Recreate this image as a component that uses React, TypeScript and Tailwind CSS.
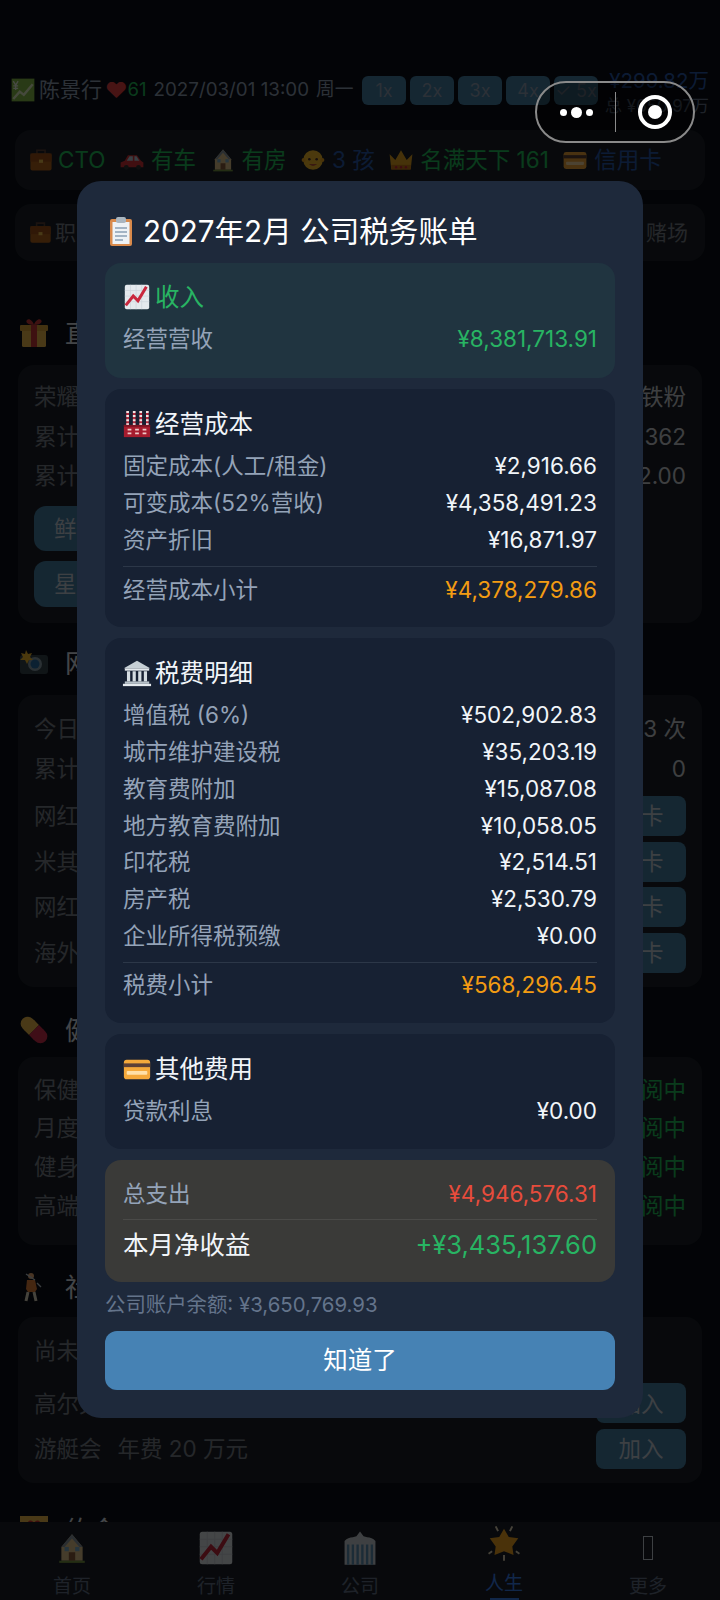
import type { ReactNode } from "react";

const font = { fontFamily: '"Inter", "Noto Sans CJK SC", sans-serif' };

function Emoji({ size = 28, children }: { size?: number; children: ReactNode }) {
  return (
    <svg width={size} height={size} viewBox="0 0 32 32" className="shrink-0">
      {children}
    </svg>
  );
}

const Briefcase = ({ size }: { size?: number }) => (
  <Emoji size={size}>
    <path d="M11 8V4h10v4" fill="none" stroke="#5d4037" strokeWidth="2" />
    <rect x="3" y="8" width="26" height="21" rx="2.5" fill="#b5651d" />
    <rect x="3" y="8" width="26" height="10" fill="#a0521a" />
    <rect x="13.5" y="15.5" width="5" height="4" fill="#f2c14e" />
  </Emoji>
);
const CreditCard = ({ size }: { size?: number }) => (
  <Emoji size={size}>
    <rect x="2" y="6" width="28" height="21" rx="3" fill="#f5a93b" />
    <rect x="2" y="10" width="28" height="4" fill="#5d4037" />
    <rect x="5" y="18" width="22" height="4" rx="1" fill="#ffe0a8" />
  </Emoji>
);
const Chart = ({ size }: { size?: number }) => (
  <Emoji size={size}>
    <rect x="3" y="3" width="26" height="26" rx="2" fill="#e4e9ed" />
    <path d="M3 9h26M3 15h26M3 21h26M9 3v26M15 3v26M21 3v26" stroke="#cfd6dc" strokeWidth="0.8" />
    <path d="M4 25 12 15l5 5 9-15" fill="none" stroke="#c9283e" strokeWidth="3.2" />
  </Emoji>
);
const YenChart = () => (
  <Emoji size={26}>
    <rect x="2" y="2" width="28" height="28" fill="#8bc34a" />
    <path d="M4 5l3 5 3-5M7 10v6M4 11h6M4 14h6" fill="none" stroke="#f1f8e9" strokeWidth="1.6" />
    <path d="M4 27 12 18l5 4 11-13" fill="none" stroke="#e8f5c8" strokeWidth="3" />
  </Emoji>
);
const Clipboard = () => (
  <Emoji size={32}>
    <rect x="5" y="4" width="22" height="27" rx="2" fill="#d98a4b" />
    <rect x="7.5" y="7" width="17" height="22" fill="#eef2f5" />
    <path d="M10 13h12M10 17h12M10 21h12M10 25h8" stroke="#8aa0b4" strokeWidth="1.6" />
    <rect x="11" y="2" width="10" height="6" rx="2" fill="#aab6c0" />
  </Emoji>
);
const Factory = () => (
  <Emoji size={30}>
    <path d="M6 2v15M13 2v15M20 2v15M27 2v15" stroke="#b5283c" strokeWidth="2.8" />
    <path d="M6 2v15M13 2v15M20 2v15M27 2v15" stroke="#efe3e3" strokeWidth="2.8" strokeDasharray="2.2 2.2" />
    <rect x="2" y="17" width="28" height="13" fill="#a61c2e" />
    <path d="M2 17h28v2H2z" fill="#7d1423" />
    <path d="M6 22h4M14 22h4M22 22h4M6 26h4M14 26h4M22 26h4" stroke="#f0c9c9" strokeWidth="2" />
  </Emoji>
);
const Bank = () => (
  <Emoji size={30}>
    <path d="M16 3 30 11H2z" fill="#c7d0d6" />
    <rect x="3" y="11" width="26" height="2.5" fill="#e4e9ed" />
    <path d="M7 14v11M13 14v11M19 14v11M25 14v11" stroke="#d5dde2" strokeWidth="3.4" />
    <rect x="3" y="25" width="26" height="2.5" fill="#b8c2c9" />
    <rect x="1" y="27.5" width="30" height="2.5" fill="#e4e9ed" />
  </Emoji>
);
const Car = ({ size }: { size?: number }) => (
  <Emoji size={size}>
    <path d="M2 25v-6l5-2 4-7h11l5 7 3 2v6z" fill="#d9343a" />
    <path d="M13 11.5h4V17H9.5zM19 11.5h2.5L25 17h-6z" fill="#bcd3e3" />
    <circle cx="9" cy="25" r="3" fill="#333" />
    <circle cx="24" cy="25" r="3" fill="#333" />
  </Emoji>
);
const House = ({ size }: { size?: number }) => (
  <Emoji size={size}>
    <path d="M16 3 26 15v13H6V15z" fill="#e6c88f" />
    <path d="M16 3 26 15h-3L16 7l-7 8H6z" fill="#8d9aa6" />
    <rect x="13" y="20" width="6" height="8" fill="#8d5f3c" />
    <rect x="9" y="15" width="4" height="4" fill="#7fb2d1" />
    <rect x="19" y="15" width="4" height="4" fill="#7fb2d1" />
    <rect x="4" y="28" width="24" height="2" fill="#7b9a43" />
  </Emoji>
);
const Baby = ({ size }: { size?: number }) => (
  <Emoji size={size}>
    <circle cx="16" cy="16" r="12" fill="#fbc02d" />
    <circle cx="4.5" cy="16" r="2.5" fill="#f5ab20" />
    <circle cx="27.5" cy="16" r="2.5" fill="#f5ab20" />
    <circle cx="11.5" cy="15" r="1.6" fill="#4e342e" />
    <circle cx="20.5" cy="15" r="1.6" fill="#4e342e" />
    <path d="M11 21c3 3 7 3 10 0" fill="#c2553b" />
  </Emoji>
);
const Crown = ({ size }: { size?: number }) => (
  <Emoji size={size}>
    <path d="M4 27 2 9l7 7 7-12 7 12 7-7-2 18z" fill="#eaa823" />
    <rect x="4" y="22" width="24" height="6" fill="#c9781a" />
    <circle cx="10" cy="25" r="1.5" fill="#c9283e" />
    <circle cx="16" cy="25" r="1.5" fill="#c9283e" />
    <circle cx="22" cy="25" r="1.5" fill="#c9283e" />
  </Emoji>
);
const Gift = () => (
  <Emoji size={32}>
    <rect x="4" y="12" width="24" height="18" rx="1.5" fill="#f4c04e" />
    <rect x="2" y="8" width="28" height="6" rx="1" fill="#e2a93a" />
    <rect x="13" y="8" width="6" height="22" fill="#d13b3b" />
    <path d="M16 8C10 8 7 5 9 3c2-2 6 1 7 5 1-4 5-7 7-5 2 2-1 5-7 5z" fill="#d13b3b" />
  </Emoji>
);
const CameraFlash = () => (
  <Emoji size={32}>
    <rect x="2" y="8" width="28" height="19" rx="3" fill="#37474f" />
    <circle cx="17" cy="17" r="7" fill="#90a4ae" />
    <circle cx="17" cy="17" r="4.5" fill="#2a6fa8" />
    <path d="m8 3 2 4 4-1-2 4 3 3-4 0-2 4-2-4-5 0 3-3-2-4 4 1z" fill="#fbc02d" />
  </Emoji>
);
const Pill = () => (
  <Emoji size={32}>
    <g transform="rotate(45 16 16)">
      <rect x="0" y="9" width="16" height="14" rx="7" fill="#f4c04e" />
      <rect x="9" y="9" width="7" height="14" fill="#f4c04e" />
      <rect x="16" y="9" width="16" height="14" rx="7" fill="#d32f4f" />
      <rect x="16" y="9" width="7" height="14" fill="#d32f4f" />
    </g>
  </Emoji>
);
const Golfer = () => (
  <Emoji size={32}>
    <circle cx="13" cy="5" r="3" fill="#f3b27a" />
    <path d="M9 9h8l2 9-2 3h-7l-2-3z" fill="#e8823a" />
    <path d="M10 21 8 30M16 21l2 9" stroke="#e8e0c8" strokeWidth="3" />
    <path d="M17 9 8 3M19 12l4 4" stroke="#c7d0d6" strokeWidth="1.4" />
  </Emoji>
);
const LoveLetter = () => (
  <Emoji size={32}>
    <rect x="2" y="2" width="28" height="24" fill="#f4c04e" />
    <path d="M16 19C9 13 8 9 11 7c2-1 4 0 5 2 1-2 3-3 5-2 3 2 2 6-5 12z" fill="#d32f2f" />
  </Emoji>
);
const Office = () => (
  <Emoji size={38}>
    <path d="M3 30V10q3-3 7-3l3-1 3-4 3 4 3 1q4 0 7 3v20z" fill="#cfd6dc" />
    <path d="M6 13v17M10 13v17M14 13v17M18 13v17M22 13v17M26 13v17" stroke="#5f93b8" strokeWidth="2" />
  </Emoji>
);
const Glowing = () => (
  <Emoji size={38}>
    <path d="m16 4 4 7 8 1-5 7 1 7-8-3-8 3 1-7-5-7 8-1z" fill="#f7a823" />
    <path d="M9 2l2 4M23 2l-2 4M3 25l3-2M29 25l-3-2M16 26v5" stroke="#e9dcc0" strokeWidth="1.6" />
  </Emoji>
);

function SpeedButton({ label }: { label: string }) {
  return (
    <div className="w-[44px] h-[29px] rounded-md bg-[#4682a8] text-[#94a3b8] text-[18px] flex items-center justify-center whitespace-nowrap">
      {label}
    </div>
  );
}

function BgRow({ left, right, rightClass = "text-[#cfd4da]", heightClass = "h-[39.7px]" }: { left: string; right: ReactNode; rightClass?: string; heightClass?: string }) {
  return (
    <div className={`flex justify-between items-center text-[22.5px] text-[#7c838e] ${heightClass}`}>
      <span>{left}</span>
      <span className={rightClass}>{right}</span>
    </div>
  );
}

function BgAction({ left, action }: { left: ReactNode; action: string }) {
  return (
    <div className="flex justify-between items-center h-[45.5px] text-[22.5px] text-[#7c838e]">
      <span className="flex gap-[16px]">{left}</span>
      <span className="w-[90px] h-[40px] rounded-lg bg-[#4682a8] text-[#cbd5e1] flex items-center justify-center">{action}</span>
    </div>
  );
}

function SectionTitle({ icon, title, className = "mb-[10px]" }: { icon: ReactNode; title: string; className?: string }) {
  return (
    <div className={`flex items-center gap-[15px] h-[44px] text-[26px] text-[#e2e8f0] ${className}`}>
      {icon}
      <span>{title}</span>
    </div>
  );
}

function Background() {
  return (
    <div className="px-[18px] pt-[72px]">
      <div className="-mx-[8px] flex items-center h-[36px] text-[21px] text-[#94a3b8] whitespace-nowrap">
        <div className="w-[352px] flex items-center">
          <YenChart />
          <span className="ml-[3px]">陈景行</span>
          <span className="ml-[3px] text-[#ef4444] text-[22px] leading-none">♥</span>
          <span className="text-[#22c55e] text-[18.5px]">61</span>
          <span className="ml-[7px] text-[18.8px]">2027/03/01 13:00</span>
          <span className="ml-[7px] text-[18.8px]">周一</span>
        </div>
        <div className="flex gap-[4px]">
          <SpeedButton label="1x" />
          <SpeedButton label="2x" />
          <SpeedButton label="3x" />
          <SpeedButton label="4x" />
          <SpeedButton label="✓ 5x" />
        </div>
        <div className="ml-auto pr-[1px] mt-[6px] text-right leading-none">
          <div className="text-[20.5px] text-[#2a5cb0]">¥299.82万</div>
          <div className="mt-[6px] text-[17px] text-[#64748b]">总 ¥650.97万</div>
        </div>
      </div>

      <div className="-mx-[3px] mt-[22px] h-[60px] rounded-2xl bg-[#1c2129] px-[13px] flex items-center gap-[13.5px] text-[22.5px] whitespace-nowrap">
        <span className="flex items-center gap-[4px] text-[#22c55e]"><Briefcase size={26} /> CTO</span>
        <span className="flex items-center gap-[6px] text-[#22c55e]"><Car size={26} /> 有车</span>
        <span className="flex items-center gap-[6px] text-[#22c55e]"><House size={26} /> 有房</span>
        <span className="flex items-center gap-[6px] text-[#2a5cb0]"><Baby size={26} /> 3 孩</span>
        <span className="flex items-center gap-[6px] text-[#22c55e]"><Crown size={26} /> 名满天下 161</span>
        <span className="flex items-center gap-[6px] text-[#2a5cb0]"><CreditCard size={26} /> 信用卡</span>
      </div>

      <div className="-mx-[3px] mt-[14px] h-[57px] rounded-2xl bg-[#1c2129] pl-[13px] pr-[17px] flex items-center justify-between text-[21px] text-[#7c838e]">
        <span className="flex items-center gap-[2px]"><Briefcase size={25} />职业</span>
        <span>赌场</span>
      </div>

      <div className="mt-[50px]">
        <SectionTitle icon={<Gift />} title="直播" />
        <div className="rounded-2xl bg-[#1c2129] h-[258px] px-[16px] pt-[12px]">
          <BgRow left="荣耀等级" right="铁粉" />
          <BgRow left="累计粉丝" right="362" />
          <BgRow left="累计收入" right="2.00" />
          <div className="mt-[10px] w-[300px] h-[45px] rounded-xl bg-[#4682a8] text-[#cbd5e1] text-[22.5px] pl-[20px] flex items-center">鲜花</div>
          <div className="mt-[10px] w-[300px] h-[46px] rounded-xl bg-[#4682a8] text-[#cbd5e1] text-[22.5px] pl-[20px] flex items-center">星光</div>
        </div>
      </div>

      <div className="mt-[18px]">
        <SectionTitle icon={<CameraFlash />} title="网红" />
        <div className="rounded-2xl bg-[#1c2129] h-[292px] px-[16px] pt-[14px]">
          <BgRow left="今日打卡" right="3 次" />
          <BgRow left="累计打卡" right="0" />
          <div className="mt-[5px]">
            <BgAction left="网红餐厅" action="打卡" />
            <BgAction left="米其林" action="打卡" />
            <BgAction left="网红景点" action="打卡" />
            <BgAction left="海外旅行" action="打卡" />
          </div>
        </div>
      </div>

      <div className="mt-[21px]">
        <SectionTitle icon={<Pill />} title="健康" className="mb-[5px]" />
        <div className="rounded-2xl bg-[#1c2129] h-[188px] px-[16px] pt-[13px]">
          <BgRow left="保健品" right="订阅中" rightClass="text-[#22c55e]" heightClass="h-[38.8px]" />
          <BgRow left="月度体检" right="订阅中" rightClass="text-[#22c55e]" heightClass="h-[38.8px]" />
          <BgRow left="健身房" right="订阅中" rightClass="text-[#22c55e]" heightClass="h-[38.8px]" />
          <BgRow left="高端医疗" right="订阅中" rightClass="text-[#22c55e]" heightClass="h-[38.8px]" />
        </div>
      </div>

      <div className="mt-[20px]">
        <SectionTitle icon={<Golfer />} title="社交" className="mb-[8px]" />
        <div className="rounded-2xl bg-[#1c2129] h-[166px] px-[16px] pt-[14px]">
          <BgRow left="尚未加入" right="" />
          <div className="mt-[10px]">
            <BgAction left="高尔夫俱乐部" action="加入" />
            <BgAction left={<><span>游艇会</span><span>年费 20 万元</span></>} action="加入" />
          </div>
        </div>
      </div>

      <div className="mt-[25px]">
        <SectionTitle icon={<LoveLetter />} title="约会" />
      </div>
    </div>
  );
}

function TabBar() {
  const tabs = [
    { label: "首页", icon: <House size={34} /> },
    { label: "行情", icon: <Chart size={40} /> },
    { label: "公司", icon: <Office /> },
    { label: "人生", icon: <Glowing />, active: true },
    { label: "更多", icon: <div className="w-[10px] h-[24px] border border-[#cbd5e1]" /> },
  ];
  return (
    <div className="absolute left-0 right-0 bottom-0 h-[78px] bg-[#1c2129] flex">
      {tabs.map((t) => (
        <div key={t.label} className="flex-1 relative flex flex-col items-center pt-[8px]">
          <div className={t.active ? "h-[36px] flex items-center justify-center -mt-[5px]" : "h-[36px] flex items-center justify-center"}>{t.icon}</div>
          <span className={t.active ? "mt-[11px] text-[19px] leading-[24px] text-[#3b82f6]" : "mt-[9px] text-[19px] leading-[24px] text-[#64748b]"}>{t.label}</span>
          {t.active && <div className="absolute bottom-0 w-[29px] h-[2px] bg-[#3b82f6]" />}
        </div>
      ))}
    </div>
  );
}

function Row({ label, value, valueClass = "text-[#f1f5f9]" }: { label: string; value: string; valueClass?: string }) {
  return (
    <div className="flex justify-between items-center h-[36.7px] text-[22.5px]">
      <span className="text-[#94a3b8]">{label}</span>
      <span className={valueClass}>{value}</span>
    </div>
  );
}

function Heading({ icon, title, className = "text-[#f1f5f9]" }: { icon: ReactNode; title: string; className?: string }) {
  return (
    <div className={`flex items-center gap-[4px] h-[34px] text-[24.5px] mb-[7px] ${className}`}>
      <div className="w-[28px] flex justify-center">{icon}</div>
      <span>{title}</span>
    </div>
  );
}

function BillModal() {
  return (
    <div className="absolute left-[77px] top-[181px] w-[566px] h-[1237px] rounded-[24px] bg-[#1e293b] px-[28px] pt-[30px]">
      <div className="flex items-center gap-[6px] h-[40px] text-[29.6px] text-white">
        <Clipboard />
        <span>2027年2月 公司税务账单</span>
      </div>

      <div className="mt-[12px] rounded-2xl bg-[#203440] h-[115px] px-[18px] pt-[17px]">
        <Heading icon={<Chart size={30} />} title="收入" className="text-[#28b463]" />
        <Row label="经营营收" value="¥8,381,713.91" valueClass="text-[#28b463]" />
      </div>

      <div className="mt-[11px] rounded-2xl bg-[#172133] h-[238px] px-[18px] pt-[18px]">
        <Heading icon={<Factory />} title="经营成本" />
        <Row label="固定成本(人工/租金)" value="¥2,916.66" />
        <Row label="可变成本(52%营收)" value="¥4,358,491.23" />
        <Row label="资产折旧" value="¥16,871.97" />
        <div className="mt-[8px] pt-[4px] border-t border-[#2c3748]">
          <Row label="经营成本小计" value="¥4,378,279.86" valueClass="text-[#f39c12]" />
        </div>
      </div>

      <div className="mt-[11px] rounded-2xl bg-[#172133] h-[385px] px-[18px] pt-[18px]">
        <Heading icon={<Bank />} title="税费明细" />
        <Row label="增值税 (6%)" value="¥502,902.83" />
        <Row label="城市维护建设税" value="¥35,203.19" />
        <Row label="教育费附加" value="¥15,087.08" />
        <Row label="地方教育费附加" value="¥10,058.05" />
        <Row label="印花税" value="¥2,514.51" />
        <Row label="房产税" value="¥2,530.79" />
        <Row label="企业所得税预缴" value="¥0.00" />
        <div className="mt-[8px] pt-[4px] border-t border-[#2c3748]">
          <Row label="税费小计" value="¥568,296.45" valueClass="text-[#f39c12]" />
        </div>
      </div>

      <div className="mt-[11px] rounded-2xl bg-[#172133] h-[115px] px-[18px] pt-[18px]">
        <Heading icon={<CreditCard size={30} />} title="其他费用" />
        <Row label="贷款利息" value="¥0.00" />
      </div>

      <div className="mt-[11px] rounded-2xl bg-[#3a3a38] h-[122px] px-[18px] pt-[16px]">
        <Row label="总支出" value="¥4,946,576.31" valueClass="text-[#e74c3c]" />
        <div className="mt-[6px] pt-[7px] border-t border-[#4a4a48] flex justify-between items-center h-[44px] text-[25.5px]">
          <span className="text-[#f1f5f9]">本月净收益</span>
          <span className="text-[#28b463]">+¥3,435,137.60</span>
        </div>
      </div>

      <div className="mt-[10px] h-[26px] flex items-center text-[20.4px] text-[#64748b]">公司账户余额: ¥3,650,769.93</div>

      <button className="mt-[13px] w-full h-[59px] rounded-xl bg-[#4682b4] text-white text-[24.5px]">知道了</button>
    </div>
  );
}

function Capsule() {
  return (
    <div className="absolute left-[535px] top-[81px] w-[160px] h-[62px] rounded-full border-2 border-[#8a8a8a] bg-black/30 flex items-center">
      <div className="w-[78px] flex items-center justify-center gap-[4px]">
        <span className="w-[7px] h-[7px] rounded-full bg-white" />
        <span className="w-[11px] h-[11px] rounded-full bg-white" />
        <span className="w-[7px] h-[7px] rounded-full bg-white" />
      </div>
      <div className="w-px h-[40px] bg-[#8a8a8a]" />
      <div className="ml-[22px] w-[34px] h-[34px] rounded-full border-[4px] border-white flex items-center justify-center">
        <span className="w-[14px] h-[14px] rounded-full bg-white" />
      </div>
    </div>
  );
}

export default function App() {
  return (
    <div className="relative w-[720px] h-[1600px] overflow-hidden bg-[#0a0f18]" style={font}>
      <Background />
      <TabBar />
      <div className="absolute inset-0 bg-black/70" />
      <BillModal />
      <Capsule />
    </div>
  );
}
